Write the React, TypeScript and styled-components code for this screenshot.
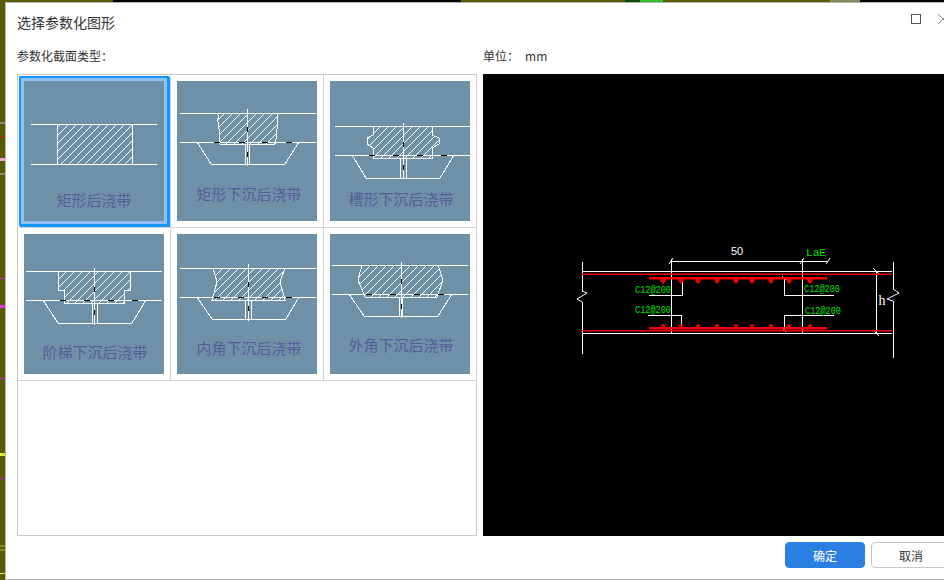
import styled, { createGlobalStyle } from 'styled-components';

const GlobalStyle = createGlobalStyle`
    html, body {
        margin: 0;
        padding: 0;
        height: 100%;
        overflow: hidden;
    }
`;

const OLIVE = '#5a5a00';

// slivers of the CAD window showing round the dialog
const leftMarks: [number, number, string][] = [
    [122, 2, '#8a8a70'],
    [136, 1, '#d01818'],
    [158, 3, '#f0a0e0'],
    [173, 2, '#8a8a70'],
    [278, 1, '#e020e0'],
    [305, 3, '#e830e8'],
    [378, 1, '#d020d0'],
    [453, 3, '#e8e830'],
    [478, 1, '#d010d0'],
    [545, 2, '#8a8a10'],
    [549, 2, '#8a8a10'],
    [573, 1, '#e8e830']
];
const topMarks: [number, number, string][] = [
    [113, 348, '#000000'],
    [625, 15, '#0a4a0a'],
    [640, 23, '#30c030'],
    [830, 30, '#8a8a60'],
    [860, 84, '#000000']
];
const layer = (c: string, x: number, y: number, w: number, h: number) =>
    `linear-gradient(${c},${c}) ${x}px ${y}px / ${w}px ${h}px no-repeat`;
const backdropLayers = [
    ...leftMarks.map(([y, h, c]) => layer(c, 0, y, 5, h)),
    ...topMarks.map(([x, w, c]) => layer(c, x, 0, w, 2))
].join(',');

const Backdrop = styled.div`
    width: 944px;
    height: 580px;
    overflow: hidden;
    padding: 2px 0 0 5px;
    box-sizing: border-box;
    background: ${backdropLayers}, ${OLIVE};
`;

const Dialog = styled.div`
    width: 960px;
    height: 578px;
    box-sizing: border-box;
    background: #ffffff;
    border-left: 1px solid #b4b4b4;
    border-top: 1px solid #b4b4b4;
    border-bottom: 1px solid #b4b4b4;
    display: flex;
    flex-direction: column;
    font-family: 'Noto Sans CJK SC', 'Liberation Sans', sans-serif;
    color: #333333;
`;

const TitleBar = styled.div`
    height: 38px;
    flex: none;
    display: flex;
    align-items: center;
    padding: 0 17px 0 11px;
`;

const Title = styled.div`
    flex: 1;
    font-size: 14px;
`;

const WindowButton = styled.svg`
    display: block;
    width: 10px;
    height: 10px;
    margin-left: 17px;
    margin-top: -6px;
`;

const LabelRow = styled.div`
    height: 28px;
    margin-bottom: 5px;
    flex: none;
    display: grid;
    grid-template-columns: 460px 1fr;
    column-gap: 6px;
    padding-left: 11px;
    align-items: center;
    font-size: 12px;
`;

const UnitLabel = styled.div`
    display: flex;
    gap: 6px;
`;

const Body = styled.div`
    height: 462px;
    flex: none;
    display: grid;
    grid-template-columns: 460px 1fr;
    column-gap: 6px;
    padding-left: 11px;
`;

const Gallery = styled.div`
    border: 1px solid #c8c8c8;
    box-sizing: border-box;
    display: grid;
    grid-template-columns: repeat(3, 153px);
    grid-auto-rows: 153px;
    align-content: start;
`;

const Cell = styled.div`
    box-sizing: border-box;
    padding: 6px;
    border-right: 1px solid #d4d4d4;
    border-bottom: 1px solid #d4d4d4;
`;

const Tile = styled.div<{ $selected?: boolean }>`
    width: 140px;
    height: 140px;
    background: #6f91a8;
    box-shadow: ${(p) =>
        p.$selected
            ? '0 0 0 3px #90c0f5, 0 0 0 5px #1296ff, 1px 1px 0 5px #1296ff'
            : 'none'};
`;

const TileDrawing = styled.svg`
    display: block;
    width: 140px;
    height: 140px;
`;

const TileCaption = styled.text`
    font-family: 'Noto Sans CJK SC', sans-serif;
    font-size: 15px;
    fill: #565d98;
    text-anchor: middle;
`;

const CadPanel = styled.div`
    background: #000000;
`;

const CadDrawing = styled.svg`
    display: block;
    width: 477px;
    height: 462px;
`;

const CadNote = styled.text`
    font-family: 'Liberation Mono', monospace;
    font-size: 10px;
    fill: #00e000;
`;

const CadDim = styled.text<{ $green?: boolean; $serif?: boolean }>`
    font-family: ${(p) =>
        p.$green
            ? "'Liberation Mono', monospace"
            : p.$serif
              ? "'Liberation Serif', serif"
              : "'Liberation Sans', sans-serif"};
    font-size: ${(p) => (p.$serif ? '14px' : '11px')};
    fill: ${(p) => (p.$green ? '#00e000' : '#ffffff')};
    text-anchor: middle;
`;

const Footer = styled.div`
    margin-top: 6px;
    display: flex;
    justify-content: flex-end;
    gap: 6px;
    padding-right: 14px;
`;

const Button = styled.button<{ $primary?: boolean }>`
    width: 80px;
    height: 26px;
    box-sizing: border-box;
    padding: 0;
    border-radius: 4px;
    font-family: inherit;
    font-size: 12px;
    border: 1px solid ${(p) => (p.$primary ? '#2b7fe3' : '#c8c8c8')};
    background: ${(p) => (p.$primary ? '#2b7fe3' : '#ffffff')};
    color: ${(p) => (p.$primary ? '#ffffff' : '#333333')};
`;

type Section = {
    caption: string;
    captionX: number;
    captionY: number;
    top: number;
    bottom: number;
    lineX: [number, number];
    axis: number;
    axisY: [number, number];
    hatch: string;
    pan: string;
    webX: [number, number];
    webY: [number, number];
    dashX: number[];
    dashV: number[];
};

const sections: Section[] = [
    {
        caption: '矩形下沉后浇带',
        captionX: 72,
        captionY: 119,
        top: 32,
        bottom: 61,
        lineX: [3, 139],
        axis: 70,
        axisY: [28, 85],
        hatch: '40,32 42,36 40,39 42,43 41,46 43,50 42,54 43,63 98,63 100,54 99,50 101,46 100,43 101,39 100,36 101,32',
        pan: '20,61 34,83 108,83 122,61',
        webX: [68, 72],
        webY: [63, 83],
        dashX: [37, 62, 85, 109],
        dashV: [46, 71]
    },
    {
        caption: '槽形下沉后浇带',
        captionX: 71,
        captionY: 124,
        top: 45,
        bottom: 74,
        lineX: [5, 140],
        axis: 73,
        axisY: [42, 98],
        hatch: '43,45 43,54 37,57 37,63 43,67 43,77 102,77 102,67 109,63 109,57 102,54 102,45',
        pan: '22,74 36,97 110,97 124,74',
        webX: [70, 76],
        webY: [77, 97],
        dashX: [39, 63, 87, 111],
        dashV: [61, 84]
    },
    {
        caption: '阶梯下沉后浇带',
        captionX: 71,
        captionY: 124,
        top: 37,
        bottom: 66,
        lineX: [2, 138],
        axis: 70,
        axisY: [34, 91],
        hatch: '34,37 34,56 40,56 40,69 100,69 100,56 106,56 106,37',
        pan: '19,66 34,89 108,89 122,66',
        webX: [68, 73],
        webY: [69, 89],
        dashX: [36, 60, 84, 108],
        dashV: [53, 76]
    },
    {
        caption: '内角下沉后浇带',
        captionX: 72,
        captionY: 120,
        top: 34,
        bottom: 63,
        lineX: [3, 139],
        axis: 71,
        axisY: [30, 87],
        hatch: '36,34 40,48 35,66 108,66 103,48 108,34',
        pan: '20,63 35,85 109,85 122,63',
        webX: [68, 74],
        webY: [66, 85],
        dashX: [37, 61, 85, 109],
        dashV: [48, 72]
    },
    {
        caption: '外角下沉后浇带',
        captionX: 71,
        captionY: 117,
        top: 31,
        bottom: 60,
        lineX: [2, 138],
        axis: 71,
        axisY: [28, 84],
        hatch: '32,31 28,46 35,63 107,63 113,46 108,31',
        pan: '19,60 34,82 108,82 122,60',
        webX: [69, 72],
        webY: [63, 82],
        dashX: [36, 60, 84, 108],
        dashV: [45, 70]
    }
];

function HatchDef({ id }: { id: string }) {
    return (
        <pattern id={id} width="8" height="8" patternUnits="userSpaceOnUse">
            <path d="M-1 9L9 -1" stroke="#fff" strokeWidth="1" fill="none" shapeRendering="crispEdges" />
        </pattern>
    );
}

function RectTile() {
    return (
        <TileDrawing viewBox="0 0 140 140">
            <defs>
                <HatchDef id="hatch-rect" />
            </defs>
            <rect x="33" y="43" width="75" height="40" fill="url(#hatch-rect)" />
            <g stroke="#fff" fill="none" shapeRendering="crispEdges">
                <path d="M7 43H133M7 83H133" />
                <path d="M33 43V83M108 43V83" />
            </g>
            <TileCaption x="70" y="125">矩形后浇带</TileCaption>
        </TileDrawing>
    );
}

function SectionTile({ s, id }: { s: Section; id: string }) {
    const [x1, x2] = s.lineX;
    return (
        <TileDrawing viewBox="0 0 140 140">
            <defs>
                <HatchDef id={id} />
            </defs>
            <polygon points={s.hatch} fill={`url(#${id})`} />
            <g stroke="#fff" fill="none" shapeRendering="crispEdges">
                <polygon points={s.hatch} />
                <path d={`M${x1} ${s.top}H${x2}M${x1} ${s.bottom}H${x2}`} />
                <path d={`M${s.axis} ${s.axisY[0]}V${s.axisY[1]}`} />
                <path d={`M${s.webX[0]} ${s.webY[0]}V${s.webY[1]}M${s.webX[1]} ${s.webY[0]}V${s.webY[1]}`} />
                <polyline points={s.pan} />
            </g>
            <g stroke="#000" fill="none" shapeRendering="crispEdges">
                {s.dashX.map((x) => (
                    <path key={x} d={`M${x} ${s.bottom}h6`} />
                ))}
                {s.dashV.map((y) => (
                    <path key={y} d={`M${s.axis} ${y}v5`} />
                ))}
            </g>
            <TileCaption x={s.captionX} y={s.captionY}>{s.caption}</TileCaption>
        </TileDrawing>
    );
}

const barMarks = [663, 681, 698, 717, 736, 752, 771, 789, 810];

function CadSection() {
    return (
        <CadDrawing viewBox="483 74 477 462">
            <g stroke="#fff" fill="none" shapeRendering="crispEdges">
                <path d="M582 271H892M582 333H892" />
                <path d="M671 259V333M802 259V333M876 271V333" />
                <path d="M671 261H828" />
                <path d="M649 295H682V281M648 315H681V327" />
                <path d="M834 295H784V278M834 315H784V330" />
                <path d="M582 262V291M582 302V354M893 262V289M893 301V358" />
            </g>
            <g stroke="#fff" fill="none" strokeWidth="1">
                <path d="M582 291L587 293L577 299L582 302" />
                <path d="M893 289L899 293L887 299L893 301" />
                <path d="M669 264L673 258M800 264L804 258M826 264L830 258" />
                <path d="M873 268L879 274M873 330L879 336M782 276L786 280M782 328L786 332" />
            </g>
            <g fill="#f00000">
                <rect x="582" y="273.5" width="310" height="1.5" />
                <rect x="582" y="330" width="310" height="1.5" />
                <rect x="649" y="277" width="178" height="2.5" />
                <rect x="649" y="327" width="178" height="2.5" />
                {barMarks.map((x) => (
                    <path key={x} d={`M${x - 3} 279H${x + 3}L${x + 2} 282L${x} 284L${x - 2} 282Z`} />
                ))}
                {barMarks.map((x) => (
                    <path key={x} d={`M${x} 323L${x + 1} 325H${x + 2.5}L${x + 1.5} 327H${x - 1.5}L${x - 2.5} 325H${x - 1}Z`} />
                ))}
            </g>
            <CadNote x="635" y="293" textLength="36" lengthAdjust="spacingAndGlyphs">C12@200</CadNote>
            <CadNote x="635" y="313" textLength="36" lengthAdjust="spacingAndGlyphs">C12@200</CadNote>
            <CadNote x="804" y="292" textLength="36" lengthAdjust="spacingAndGlyphs">C12@200</CadNote>
            <CadNote x="805" y="314" textLength="36" lengthAdjust="spacingAndGlyphs">C12@200</CadNote>
            <CadDim x="737" y="255">50</CadDim>
            <CadDim $green x="816" y="256">LaE</CadDim>
            <CadDim $serif x="882" y="305">h</CadDim>
        </CadDrawing>
    );
}

export default function App() {
    return (
        <Backdrop>
            <GlobalStyle />
            <Dialog>
                <TitleBar>
                    <Title>选择参数化图形</Title>
                    <WindowButton viewBox="0 0 10 10">
                        <rect x="0.5" y="0.5" width="9" height="9" fill="none" stroke="#555" />
                    </WindowButton>
                    <WindowButton viewBox="0 0 10 10">
                        <path d="M0 0L10 10M10 0L0 10" stroke="#888" fill="none" />
                    </WindowButton>
                </TitleBar>
                <LabelRow>
                    <div>参数化截面类型：</div>
                    <UnitLabel>
                        <span>单位：</span>
                        <span>mm</span>
                    </UnitLabel>
                </LabelRow>
                <Body>
                    <Gallery>
                        <Cell>
                            <Tile $selected>
                                <RectTile />
                            </Tile>
                        </Cell>
                        {sections.map((s, i) => (
                            <Cell key={s.caption}>
                                <Tile>
                                    <SectionTile s={s} id={`hatch-${i}`} />
                                </Tile>
                            </Cell>
                        ))}
                    </Gallery>
                    <CadPanel>
                        <CadSection />
                    </CadPanel>
                </Body>
                <Footer>
                    <Button $primary>确定</Button>
                    <Button>取消</Button>
                </Footer>
            </Dialog>
        </Backdrop>
    );
}
